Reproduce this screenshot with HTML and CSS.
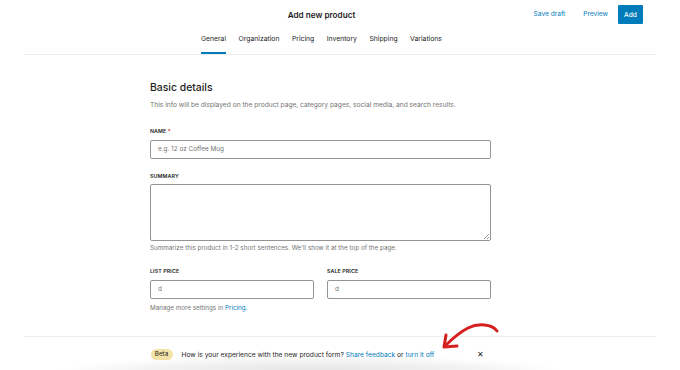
FILE: index.html
```html
<!DOCTYPE html>
<html lang="en">
<head>
<meta charset="utf-8">
<title>Add new product</title>
<link rel="stylesheet" href="styles.css">
</head>
<body>
<div class="page">
  <header class="header">
    <div class="topbar">
      <div></div>
      <h1 class="title">Add new product</h1>
      <div class="actions">
        <button class="link-btn">Save draft</button>
        <button class="link-btn">Preview</button>
        <button class="primary-btn">Add</button>
      </div>
    </div>
    <nav class="tabs">
      <a class="tab active">General</a>
      <a class="tab">Organization</a>
      <a class="tab">Pricing</a>
      <a class="tab">Inventory</a>
      <a class="tab">Shipping</a>
      <a class="tab">Variations</a>
    </nav>
  </header>

  <main class="main">
    <section class="form">
      <h2 class="section-title">Basic details</h2>
      <p class="section-desc">This info will be displayed on the product page, category pages, social media, and search results.</p>

      <label class="label label-name">Name <span class="req">*</span></label>
      <div class="input placeholder">e.g. 12 oz Coffee Mug</div>

      <label class="label label-summary">Summary</label>
      <div class="textarea"><span class="grip"></span></div>
      <p class="help">Summarize this product in 1-2 short sentences. We'll show it at the top of the page.</p>

      <div class="price-row">
        <div class="price-col">
          <label class="label">List price</label>
          <div class="input value">d</div>
        </div>
        <div class="price-col">
          <label class="label">Sale price</label>
          <div class="input value">d</div>
        </div>
      </div>
      <p class="help help-manage">Manage more settings in <a class="link">Pricing.</a></p>
    </section>
  </main>

  <footer class="footer">
    <div class="notice">
      <span class="badge">Beta</span>
      <span class="notice-text">How is your experience with the new product form? <a class="link">Share feedback</a> or <a class="link">turn it off</a></span>
      <span class="close">&#x2715;</span>
    </div>
  </footer>

  <div class="shade"></div>

  <svg class="arrow" width="70" height="34" viewBox="0 0 70 34" fill="none">
    <path d="M57 9 C 52 2, 38 1, 28 6 C 20 10, 12 17, 5 24" stroke="#d61f1f" stroke-width="3" stroke-linecap="round" fill="none"/>
    <path d="M6 13 L 4 25 L 17 24" stroke="#d61f1f" stroke-width="3" stroke-linecap="round" stroke-linejoin="round" fill="none"/>
  </svg>
</div>
</body>
</html>
```

FILE: styles.css
```css
* { box-sizing: border-box; }

html, body {
  margin: 0;
  padding: 0;
  background: #ffffff;
}

body {
  font-family: Inter, "Liberation Sans", sans-serif;
  color: #1e1e1e;
}

.page {
  position: relative;
  width: 680px;
  height: 370px;
  overflow: hidden;
  display: flex;
  flex-direction: column;
}

/* Header */
.header {
  margin: 0 24px;
  border-bottom: 1px solid #ececec;
}

.topbar {
  display: grid;
  grid-template-columns: 1fr auto 1fr;
  align-items: center;
  height: 29px;
  margin-left: -24px;
  padding-right: 13px;
}

.title {
  margin: 0;
  font-size: 8.2px;
  font-weight: 600;
  line-height: 12px;
  color: #1e1e1e;
}

.actions {
  display: flex;
  justify-content: flex-end;
  align-items: center;
}

.link-btn {
  border: 0;
  background: none;
  font-family: inherit;
  font-size: 6.6px;
  color: #007cba;
  padding: 0 9px;
  height: 19px;
  line-height: 19px;
}

.primary-btn {
  border: 0;
  background: #007cba;
  color: #fff;
  font-family: inherit;
  font-size: 6.6px;
  font-weight: 500;
  height: 19px;
  width: 25px;
  padding: 0;
  margin-left: 1px;
  border-radius: 1px;
}

.tabs {
  display: flex;
  justify-content: center;
  gap: 12.5px;
  height: 25px;
  margin-left: -24px;
  padding-right: 13px;
}

.tab {
  display: block;
  font-size: 6.8px;
  line-height: 8px;
  padding-top: 5.5px;
  color: #1e1e1e;
  border-bottom: 2px solid transparent;
  height: 25px;
}

.tab.active {
  border-bottom-color: #007cba;
}

/* Main */
.main {
  flex: 1;
  display: flex;
  justify-content: center;
  padding-right: 38px;
}

.form {
  width: 341px;
  margin-left: -1px;
}

.section-title {
  margin: 25px 0 0;
  font-size: 10.4px;
  font-weight: 500;
  line-height: 16px;
  color: #1e1e1e;
}

.section-desc {
  margin: 4px 0 0;
  font-size: 6.65px;
  line-height: 10px;
  color: #757575;
}

.label {
  display: block;
  font-size: 5.3px;
  font-weight: 600;
  text-transform: uppercase;
  letter-spacing: 0.1px;
  line-height: 8px;
  margin-bottom: 4.5px;
  color: #1e1e1e;
}

.label-name { margin-top: 17px; }
.label-summary { margin-top: 13px; }

.req { color: #cc1818; }

.input {
  height: 19px;
  border: 1px solid #949494;
  border-radius: 2px;
  font-size: 6.4px;
  line-height: 17px;
  padding-left: 7px;
  color: #757575;
}

.textarea {
  position: relative;
  height: 57px;
  border: 1px solid #949494;
  border-radius: 2px;
}

.grip {
  position: absolute;
  right: 1px;
  bottom: 1px;
  width: 5px;
  height: 5px;
  background: linear-gradient(135deg, transparent 45%, #9a9a9a 45%, #9a9a9a 55%, transparent 55%, transparent 70%, #9a9a9a 70%, #9a9a9a 80%, transparent 80%);
}

.help {
  margin: 2px 0 0;
  font-size: 6.3px;
  line-height: 10px;
  color: #757575;
}

.price-row {
  display: flex;
  gap: 13px;
  margin-top: 14px;
}

.price-col { flex: 1; }

.help-manage { margin-top: 4.5px; }

.link { color: #007cba; text-decoration: none; }

/* Footer */
.footer {
  height: 34px;
  margin: 0 24px;
  border-top: 1px solid #ececec;
  display: flex;
  justify-content: center;
  padding-right: 38px;
  padding-top: 12px;
}

.notice {
  width: 341px;
  height: 11px;
  display: flex;
  align-items: center;
}

.badge {
  background: #f3e3a6;
  color: #1e1e1e;
  font-size: 6.3px;
  line-height: 11px;
  height: 11px;
  width: 22px;
  text-align: center;
  border-radius: 6px;
  margin-right: 9px;
}

.notice-text {
  font-size: 6.66px;
  color: #1e1e1e;
  white-space: nowrap;
}

.close {
  margin-left: auto;
  margin-right: 8px;
  font-size: 7.5px;
  color: #1e1e1e;
}

.shade {
  position: absolute;
  left: 60px;
  right: 120px;
  bottom: -16px;
  height: 30px;
  background: radial-gradient(ellipse at center, rgba(0,0,0,0.10) 0%, rgba(0,0,0,0.05) 45%, rgba(0,0,0,0) 72%);
  pointer-events: none;
}

.arrow {
  position: absolute;
  left: 440px;
  top: 322px;
}
```
